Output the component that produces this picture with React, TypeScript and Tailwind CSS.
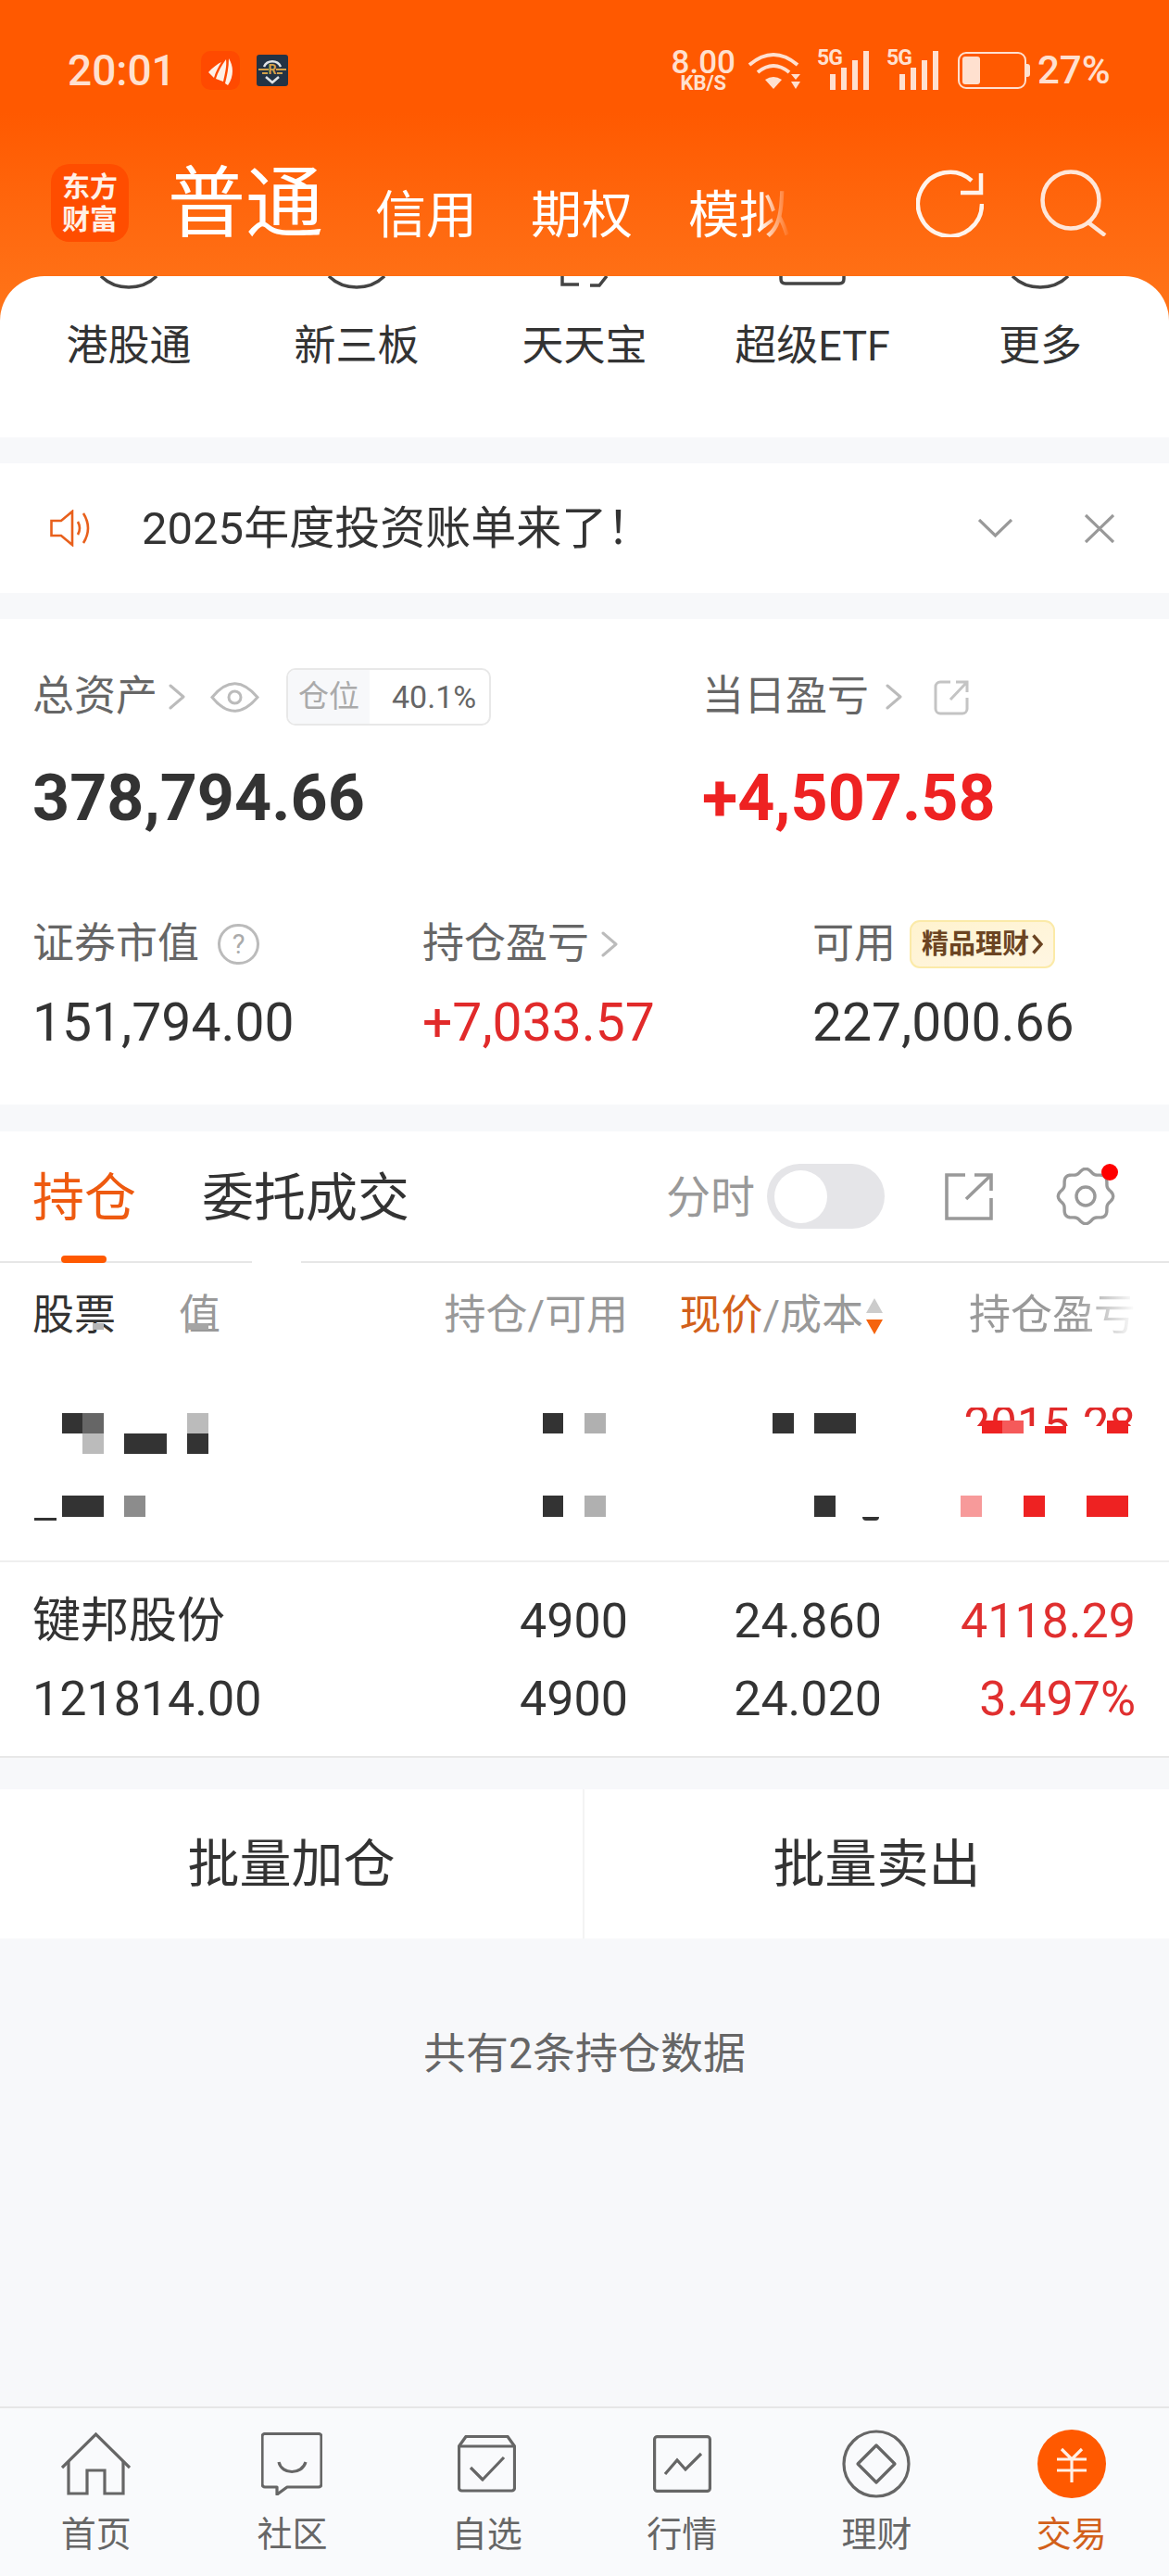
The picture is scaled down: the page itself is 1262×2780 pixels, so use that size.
import type { ReactNode } from 'react';

const gearPoints = Array.from({ length: 96 }, (_, i) => {
    const a = (i / 96) * Math.PI * 2;
    const r = 27.5 + 2.2 * Math.cos(a * 8);
    return `${(32 + r * Math.cos(a)).toFixed(1)},${(31 + r * Math.sin(a)).toFixed(1)}`;
}).join(' ');

function Chevron({ className }: { className: string }) {
    return (
        <svg viewBox="0 0 18 28" className={className} fill="none" stroke="#bbbbbb" strokeWidth="3" strokeLinecap="round" strokeLinejoin="round">
            <path d="M2 2 L16 14 L2 26" />
        </svg>
    );
}

function Block({ className }: { className: string }) {
    return <div className={`absolute ${className}`} />;
}

function SignalBars() {
    return (
        <div className="relative w-[56px] h-[42px]">
            <span className="absolute left-0 top-[-3px] text-[23px] leading-[22px] font-bold tracking-[-1px]">5G</span>
            <div className="absolute right-0 bottom-0 flex items-end gap-[6px]">
                <div className="w-[6px] h-[17px] bg-[#ffe0cf]" />
                <div className="w-[6px] h-[24px] bg-[#ffe0cf]" />
                <div className="w-[6px] h-[32px] bg-[#ffe0cf]" />
                <div className="w-[6px] h-[42px] bg-[#ffe0cf]" />
            </div>
        </div>
    );
}

function StatusBar() {
    return (
        <div className="flex items-center justify-between pt-[52px] h-[100px] pl-[73px] pr-[65px] text-[#ffe0cf]">
            <div className="flex items-center">
                <span className="text-[46px] leading-[48px] font-medium w-[144px]">20:01</span>
                <div className="w-[42px] h-[42px] rounded-[10px] bg-[#ff4a00] flex items-center justify-center">
                    <svg viewBox="0 0 42 42" className="w-[42px] h-[42px]" fill="#fff0e6">
                        <path d="M8 23 C12 18 18 14 22 12 C19 17 16 22 14 29 Z" />
                        <path d="M16 30 C18 23 22 16 27 9 C28 16 26 24 24 33 Z" />
                        <path d="M26 35 C28 27 30 18 30 8 C35 16 36 27 29 37 Z" />
                    </svg>
                </div>
                <div className="ml-[18px] w-[34px] h-[34px] rounded-[3px] bg-[#233344]">
                    <svg viewBox="0 0 34 34" className="w-[34px] h-[34px]" fill="none">
                        <path d="M8 13 A10 10 0 0 1 26 13" stroke="#dfe3e6" strokeWidth="2.5" />
                        <path d="M2 16 H13 M21 16 H32 M6 20 H12 M22 20 H28" stroke="#d2a24a" strokeWidth="2" />
                        <path d="M10 24 L17 30 L24 24" stroke="#dfe3e6" strokeWidth="2.5" />
                        <text x="17" y="21" fontSize="14" fontWeight="700" textAnchor="middle" fill="#d2a24a">R</text>
                    </svg>
                </div>
            </div>
            <div className="flex items-center">
                <div className="flex flex-col items-center font-medium">
                    <span className="text-[35px] leading-[27px]">8.00</span>
                    <span className="text-[22px] leading-[17px] font-bold">KB/S</span>
                </div>
                <svg viewBox="0 0 58 42" className="ml-[13px] w-[58px] h-[42px]" fill="none" stroke="#ffe0cf" strokeWidth="4">
                    <path d="M2 15 Q28 -7 54 15" />
                    <path d="M11 23 Q28 9 45 23" />
                    <path d="M19 31 Q28 25 37 31 L28 41 Z" fill="#ffe0cf" stroke="none" />
                    <path d="M52 31 L57 25 H47 Z M47 33 H57 L52 41 Z" fill="#ffe0cf" stroke="none" />
                </svg>
                <div className="ml-[17px]"><SignalBars /></div>
                <div className="ml-[19px]"><SignalBars /></div>
                <div className="ml-[21px] flex items-center">
                    <div className="w-[74px] h-[40px] rounded-[9px] border-[2.5px] border-[#ffe0cf] p-[3px]">
                        <div className="w-[19px] h-full rounded-[3px] bg-[#ffe0cf]" />
                    </div>
                    <div className="w-[4px] h-[14px] rounded-r-[3px] bg-[#ffe0cf]" />
                </div>
                <span className="ml-[8px] text-[42px] leading-[44px] font-medium w-[77px] whitespace-nowrap">27%</span>
            </div>
        </div>
    );
}

function NavBar() {
    return (
        <div className="flex items-center mt-[77px] h-[84px] pl-[55px] pr-[67px] text-white">
            <div className="w-[84px] h-[84px] rounded-[20px] bg-[#ff4d00] flex flex-col items-center justify-center text-[30px] leading-[35px] font-bold text-[#fff0e6]">
                <span>东方</span>
                <span>财富</span>
            </div>
            <span className="ml-[42px] text-[84px] leading-[84px] mt-[4px]">普通</span>
            <span className="ml-[56px] text-[55px] leading-[60px] mt-[26px]">信用</span>
            <span className="ml-[58px] text-[55px] leading-[60px] mt-[26px]">期权</span>
            <span className="ml-[60px] text-[55px] leading-[60px] mt-[26px] [mask-image:linear-gradient(to_right,black_70%,transparent)]">模拟</span>
            <svg viewBox="0 0 73 73" className="ml-auto w-[73px] h-[73px]" fill="none" stroke="#fff" strokeOpacity="0.92" strokeWidth="4.5">
                <path d="M71 37 A34.5 34.5 0 1 1 60 12" />
                <path d="M70 4 V25 H48" />
            </svg>
            <svg viewBox="0 0 72 72" className="ml-[61px] w-[72px] h-[72px]" fill="none" stroke="#ffe6d8" strokeWidth="4.5">
                <circle cx="33" cy="33" r="30.5" />
                <path d="M53 58 L70 71" />
            </svg>
        </div>
    );
}

function Shortcuts() {
    const items = ['港股通', '新三板', '天天宝', '超级ETF', '更多'];
    return (
        <div className="relative -mt-[48px] h-[174px] rounded-t-[48px] bg-white overflow-hidden">
            <div className="grid grid-cols-5 px-[16px]">
                {items.map((t, i) => (
                    <div key={t} className="flex flex-col items-center">
                        <div className="h-[14px] w-full flex justify-center overflow-hidden">
                            {i === 2 ? (
                                <svg viewBox="0 0 52 14" className="w-[52px] h-[14px]" fill="none" stroke="#444" strokeWidth="3.5">
                                    <path d="M2 0 V9 H20 M50 0 L42 10 H32" />
                                </svg>
                            ) : i === 3 ? (
                                <svg viewBox="0 0 72 10" className="w-[72px] h-[10px]" fill="none" stroke="#444" strokeWidth="3.5">
                                    <path d="M2 0 V3 Q2 8 7 8 H65 Q70 8 70 3 V0" />
                                </svg>
                            ) : (
                                <svg viewBox="0 0 64 14" className="w-[64px] h-[14px]" fill="none" stroke="#444" strokeWidth="3.5">
                                    <path d="M2 0 Q14 12 32 12 Q50 12 62 0" />
                                </svg>
                            )}
                        </div>
                        <span className="mt-[38px] text-[45px] leading-[48px] text-[#333333]">{t}</span>
                    </div>
                ))}
            </div>
        </div>
    );
}

function Notice() {
    return (
        <div className="mt-[28px] h-[140px] bg-white flex items-center pl-[54px] pr-[59px]">
            <svg viewBox="0 0 46 40" className="w-[46px] h-[40px]" fill="none" stroke="#e8601c" strokeWidth="2.6">
                <path d="M1.5 12 H12 L24 2 V38 L12 28 H1.5 Z" />
                <path d="M30 13 Q34 20 30 27" />
                <path d="M36 4 Q46 20 36 36" />
            </svg>
            <span className="ml-[53px] mt-[2px] text-[49px] leading-[56px] text-[#333333]">2025年度投资账单来了！</span>
            <svg viewBox="0 0 37 20" className="ml-auto w-[37px] h-[20px]" fill="none" stroke="#999999" strokeWidth="3.2">
                <path d="M1 1 L18.5 18 L36 1" />
            </svg>
            <svg viewBox="0 0 32 31" className="ml-[78px] w-[32px] h-[31px]" fill="none" stroke="#999999" strokeWidth="3.2">
                <path d="M1 1 L31 30 M31 1 L1 30" />
            </svg>
        </div>
    );
}

function Label({ children }: { children: ReactNode }) {
    return <span className="text-[45px] leading-[52px] text-[#666666]">{children}</span>;
}

function AssetCard() {
    return (
        <div className="mt-[28px] h-[524px] bg-white pl-[35px] pt-[53px]">
            <div className="grid grid-cols-[723px_1fr]">
                <div className="flex items-center h-[62px]">
                    <Label>总资产</Label>
                    <Chevron className="ml-[12px] w-[18px] h-[28px]" />
                    <svg viewBox="0 0 53 35" className="ml-[27px] w-[53px] h-[35px]" fill="none" stroke="#bbbbbb" strokeWidth="3">
                        <path d="M2 17.5 Q26 -12 51 17.5 Q26 47 2 17.5 Z" />
                        <circle cx="26.5" cy="17.5" r="6.5" />
                    </svg>
                    <div className="ml-[29px] w-[221px] h-[62px] rounded-[10px] border-2 border-[#e8e8e8] flex items-center overflow-hidden">
                        <div className="w-[88px] h-full bg-[#f7f8fa] flex items-center justify-center text-[33px] text-[#aaaaaa]">仓位</div>
                        <span className="ml-[24px] text-[34px] leading-[40px] text-[#666666]">40.1%</span>
                    </div>
                </div>
                <div className="flex items-center h-[62px]">
                    <Label>当日盈亏</Label>
                    <Chevron className="ml-[18px] w-[18px] h-[28px]" />
                    <svg viewBox="0 0 38 39" className="ml-[34px] w-[38px] h-[39px]" fill="none" stroke="#c4c4c4" strokeWidth="3">
                        <path d="M18 3 H7 a5 5 0 0 0 -5 5 V32 a5 5 0 0 0 5 5 H31 a5 5 0 0 0 5 -5 V20" />
                        <path d="M18 22 L36 3 M24 3 H36 V14" />
                    </svg>
                </div>
            </div>
            <div className="grid grid-cols-[723px_1fr] mt-[43px] text-[70px] leading-[70px] font-bold">
                <span className="text-[#333333]">378,794.66</span>
                <span className="text-[#ee2222]">+4,507.58</span>
            </div>
            <div className="grid grid-cols-[421px_421px_1fr] mt-[97px] h-[52px]">
                <div className="flex items-center">
                    <Label>证券市值</Label>
                    <div className="ml-[20px] w-[45px] h-[44px] rounded-full border-[3px] border-[#bbbbbb] flex items-center justify-center text-[29px] leading-none text-[#aaaaaa]">?</div>
                </div>
                <div className="flex items-center">
                    <Label>持仓盈亏</Label>
                    <Chevron className="ml-[13px] w-[18px] h-[28px]" />
                </div>
                <div className="flex items-center">
                    <Label>可用</Label>
                    <div className="ml-[15px] w-[157px] h-[52px] rounded-[11px] border-2 border-[#fbeaa8] bg-gradient-to-br from-[#fff3cf] to-[#fff6e2] flex items-center pl-[11px] text-[29px] leading-none font-bold text-[#6b4422]">
                        精品理财
                        <svg viewBox="0 0 12 22" className="ml-[3px] w-[12px] h-[22px]" fill="none" stroke="#6b4422" strokeWidth="3.4">
                            <path d="M1.5 1.5 L10 11 L1.5 20.5" />
                        </svg>
                    </div>
                </div>
            </div>
            <div className="grid grid-cols-[421px_421px_1fr] mt-[31px] text-[57px] leading-[56px]">
                <span className="text-[#333333]">151,794.00</span>
                <span className="text-[#e12a2a]">+7,033.57</span>
                <span className="text-[#333333]">227,000.66</span>
            </div>
        </div>
    );
}

function PositionTabs() {
    return (
        <div className="relative h-[142px] border-b-2 border-[#e6e6e6] flex items-center pl-[35px] pr-[58px]">
            <span className="mt-[4px] text-[56px] leading-[60px] text-[#ee5a10]">持仓</span>
            <span className="ml-[71px] mt-[4px] text-[56px] leading-[60px] text-[#333333]">委托成交</span>
            <span className="ml-auto mt-[4px] text-[48px] leading-[56px] text-[#999999]">分时</span>
            <div className="ml-[13px] w-[127px] h-[70px] rounded-full bg-[#e5e5e8] flex items-center pl-[8px]">
                <div className="w-[57px] h-[57px] rounded-full bg-white" />
            </div>
            <svg viewBox="0 0 54 53" className="ml-[64px] w-[54px] h-[53px]" fill="none" stroke="#999999" strokeWidth="3.6">
                <path d="M23 3 H3 V50 H51 V28" />
                <path d="M24 29 L51 3 M33 3 H51 V20" />
            </svg>
            <div className="relative ml-[67px] w-[64px] h-[62px]">
                <svg viewBox="0 0 64 62" className="w-[64px] h-[62px]" fill="none" stroke="#999999" strokeWidth="3.4">
                    <polygon points={gearPoints} />
                    <circle cx="32" cy="31" r="10" />
                </svg>
                <div className="absolute -right-[3px] -top-[4px] w-[18px] h-[18px] rounded-full bg-[#ff0000]" />
            </div>
            <div className="absolute left-[66px] bottom-[-2px] w-[49px] h-[8px] rounded-full bg-[#ff5900]" />
            <div className="absolute left-[272px] bottom-[-2px] w-[53px] h-[3px] bg-white" />
        </div>
    );
}

function TableHeader() {
    return (
        <div className="relative grid grid-cols-[300px_343px_274px_274px] items-center h-[114px] pl-[35px] text-[45px] leading-[52px] text-[#999999]">
            <div className="flex">
                <span className="text-[#333333]">股票</span>
                <span className="ml-[68px]">值</span>
            </div>
            <span className="justify-self-end">持仓/可用</span>
            <div className="justify-self-end flex items-center">
                <span className="text-[#d2601a]">现价</span>
                <span>/成本</span>
                <div className="ml-[3px] -mr-[1px] flex flex-col gap-[7px]">
                    <div className="w-0 h-0 border-x-[9.5px] border-x-transparent border-b-[16px] border-b-[#cccccc]" />
                    <div className="w-0 h-0 border-x-[9.5px] border-x-transparent border-t-[16px] border-t-[#f5640e]" />
                </div>
            </div>
            <span className="justify-self-end [mask-image:linear-gradient(to_right,black_65%,transparent)]">持仓盈亏</span>
            <Block className="left-[100px] top-[65px] w-[12px] h-[7px] bg-[#b5b5b5]" />
            <Block className="left-[202px] top-[65px] w-[23px] h-[7px] bg-[#a5a5a5]" />
        </div>
    );
}

// the two rows the screenshot has pixelated, kept as mosaic blocks
function MosaicRows() {
    return (
        <div className="relative h-[209px] border-b-2 border-[#efefef]">
            <div className="absolute right-[36px] top-[42px] h-[20px] overflow-hidden">
                <div className="-mt-[7px] text-[51px] leading-[51px] text-[#e12a2a]">2015.28</div>
            </div>
            <Block className="left-[67px] top-[48px] w-[22px] h-[22px] bg-[#333333]" />
            <Block className="left-[89px] top-[48px] w-[23px] h-[22px] bg-[#666666]" />
            <Block className="left-[202px] top-[48px] w-[23px] h-[22px] bg-[#bbbbbb]" />
            <Block className="left-[586px] top-[48px] w-[22px] h-[22px] bg-[#333333]" />
            <Block className="left-[631px] top-[48px] w-[23px] h-[22px] bg-[#b0b0b0]" />
            <Block className="left-[834px] top-[48px] w-[23px] h-[22px] bg-[#333333]" />
            <Block className="left-[879px] top-[48px] w-[45px] h-[22px] bg-[#333333]" />
            <Block className="left-[89px] top-[70px] w-[23px] h-[22px] bg-[#bbbbbb]" />
            <Block className="left-[134px] top-[70px] w-[46px] h-[22px] bg-[#333333]" />
            <Block className="left-[202px] top-[70px] w-[23px] h-[22px] bg-[#333333]" />
            <Block className="left-[1060px] top-[56px] w-[22px] h-[14px] bg-[#ee2222]" />
            <Block className="left-[1082px] top-[56px] w-[23px] h-[14px] bg-[#f55a5a]" />
            <Block className="left-[1128px] top-[62px] w-[23px] h-[8px] bg-[#ee2222]" />
            <Block className="left-[1195px] top-[56px] w-[23px] h-[14px] bg-[#ee2222]" />
            <Block className="left-[67px] top-[137px] w-[45px] h-[23px] bg-[#333333]" />
            <Block className="left-[134px] top-[137px] w-[23px] h-[23px] bg-[#8c8c8c]" />
            <Block className="left-[586px] top-[137px] w-[22px] h-[23px] bg-[#333333]" />
            <Block className="left-[631px] top-[137px] w-[23px] h-[23px] bg-[#b0b0b0]" />
            <Block className="left-[879px] top-[137px] w-[23px] h-[23px] bg-[#333333]" />
            <Block className="left-[1037px] top-[137px] w-[23px] h-[23px] bg-[#f79a9a]" />
            <Block className="left-[1105px] top-[137px] w-[23px] h-[23px] bg-[#ee2222]" />
            <Block className="left-[1173px] top-[137px] w-[45px] h-[23px] bg-[#ee2222]" />
            <Block className="left-[37px] top-[161px] w-[24px] h-[3px] bg-[#333333]" />
            <Block className="left-[931px] top-[160px] w-[18px] h-[4px] rounded-b-full bg-[#333333]" />
        </div>
    );
}

function StockRow() {
    return (
        <div className="grid grid-cols-[300px_343px_274px_274px] content-start gap-y-[24px] h-[211px] pt-[34px] pl-[35px] text-[52px] leading-[60px] text-[#333333] border-b-2 border-[#e8e8e8]">
            <span>键邦股份</span>
            <span className="justify-self-end">4900</span>
            <span className="justify-self-end">24.860</span>
            <span className="justify-self-end text-[#e02f2f]">4118.29</span>
            <span>121814.00</span>
            <span className="justify-self-end">4900</span>
            <span className="justify-self-end">24.020</span>
            <span className="justify-self-end text-[#e02f2f]">3.497%</span>
        </div>
    );
}

function BatchButtons() {
    return (
        <div className="mt-[34px] h-[161px] bg-white grid grid-cols-2 text-[56px] leading-[60px] text-[#333333]">
            <div className="flex items-center justify-center border-r-2 border-[#f3f3f3]">批量加仓</div>
            <div className="flex items-center justify-center">批量卖出</div>
        </div>
    );
}

function TabItem({ label, active, className, children }: { label: string; active?: boolean; className?: string; children: ReactNode }) {
    return (
        <div className={`flex flex-col items-center ${className ?? ''}`}>
            <div className="h-[74px] flex items-center justify-center">{children}</div>
            <span className={active ? 'mt-[19px] text-[38px] leading-[40px] text-[#d2601a]' : 'mt-[19px] text-[38px] leading-[40px] text-[#666666]'}>{label}</span>
        </div>
    );
}

function BottomNav() {
    return (
        <div className="h-[183px] border-t-2 border-[#e6e6e6] bg-[#f9fafc] grid grid-cols-6 pt-[23px]">
            <TabItem label="首页" className="pr-[3px]">
                <svg viewBox="0 0 75 68" className="w-[75px] h-[68px]" fill="none" stroke="#666666" strokeWidth="3.2">
                    <path d="M1 38 L37.5 2 L74 38" />
                    <path d="M8 31 V66 H28 V41 H47 V66 H67 V31" />
                </svg>
            </TabItem>
            <TabItem label="社区">
                <svg viewBox="0 0 66 68" className="w-[66px] h-[68px]" fill="none" stroke="#666666" strokeWidth="3.2" strokeLinejoin="round">
                    <path d="M4 1.5 H62 a3 3 0 0 1 3 3 V56 a3 3 0 0 1 -3 3 H28 L17 67 V59 H4 a3 3 0 0 1 -3 -3 V4.5 a3 3 0 0 1 3 -3 Z" />
                    <path d="M19 32 C22 46 44 46 48 32" />
                </svg>
            </TabItem>
            <TabItem label="自选">
                <svg viewBox="0 0 63 62" className="w-[63px] h-[62px]" fill="none" stroke="#666666" strokeWidth="3.2" strokeLinejoin="round">
                    <path d="M9 1.5 H54 L61.5 12 V57 a3 3 0 0 1 -3 3 H4.5 a3 3 0 0 1 -3 -3 V12 Z" />
                    <path d="M1.5 12 H61.5" />
                    <path d="M14 35 L27 48 L50 24" />
                </svg>
            </TabItem>
            <TabItem label="行情">
                <svg viewBox="0 0 63 62" className="w-[63px] h-[62px]" fill="none" stroke="#666666" strokeWidth="3.2">
                    <rect x="1.6" y="1.6" width="59.8" height="58.8" rx="3" />
                    <path d="M13 42 L26 27 L35 37 L52 20" />
                </svg>
            </TabItem>
            <TabItem label="理财">
                <svg viewBox="0 0 74 74" className="w-[74px] h-[74px]" fill="none" stroke="#666666" strokeWidth="3.2" strokeLinejoin="round">
                    <circle cx="37" cy="37" r="35" />
                    <path d="M37 17 L57 37 L37 57 L17 37 Z" />
                </svg>
            </TabItem>
            <TabItem label="交易" active>
                <svg viewBox="0 0 74 74" className="w-[74px] h-[74px]" fill="none" stroke="#fff0e6" strokeWidth="3.2">
                    <circle cx="37" cy="37" r="37" fill="#ff5900" stroke="none" />
                    <path d="M26 21 L37 32 L48 21 M21 32 H53 M21 44 H53 M37 32 V57" />
                </svg>
            </TabItem>
        </div>
    );
}

export default function App() {
    return (
        <div className="w-[1262px] h-[2780px] flex flex-col bg-[#f7f8fa] overflow-hidden [font-family:Roboto,'Noto_Sans_CJK_SC',sans-serif]">
            <div className="h-[346px] bg-gradient-to-b from-[#ff5900] from-[35%] to-[#ff7519]">
                <StatusBar />
                <NavBar />
            </div>
            <Shortcuts />
            <Notice />
            <AssetCard />
            <div className="mt-[29px] bg-white">
                <PositionTabs />
                <TableHeader />
                <MosaicRows />
                <StockRow />
            </div>
            <BatchButtons />
            <div className="flex-1 flex justify-center pt-[100px] text-[46px] leading-[48px] text-[#666666]">
                共有2条持仓数据
            </div>
            <BottomNav />
        </div>
    );
}
